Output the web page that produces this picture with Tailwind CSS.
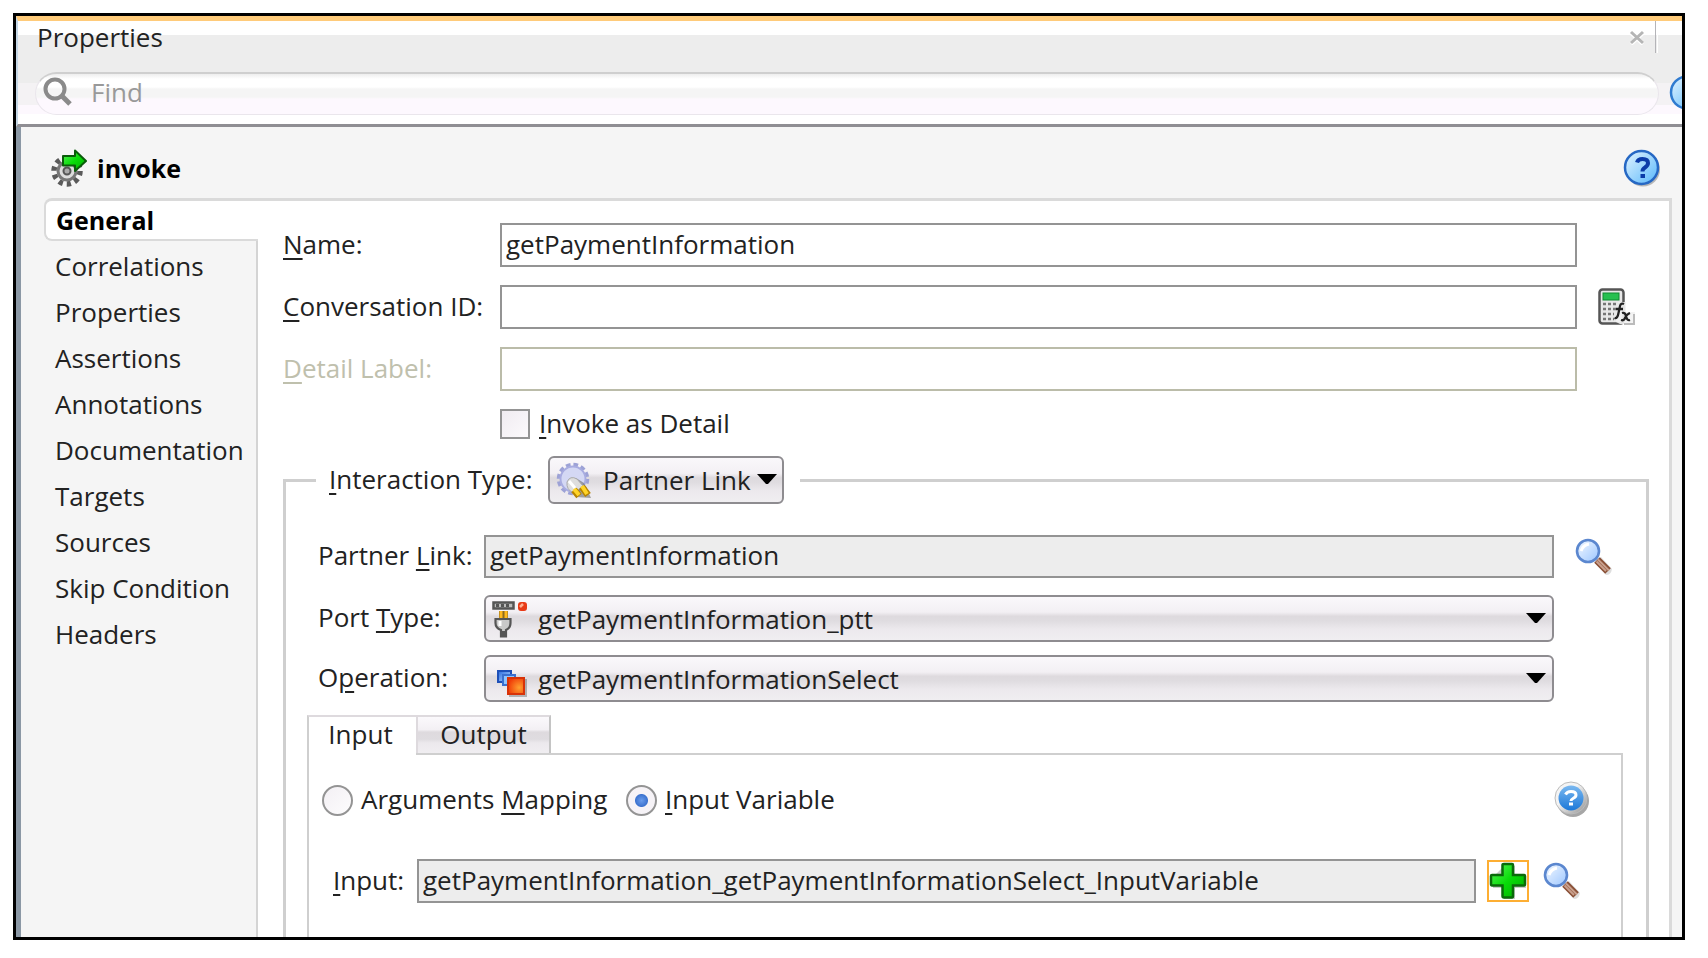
<!DOCTYPE html>
<html lang="en">
<head>
<meta charset="utf-8">
<title>Properties</title>
<script src="https://cdn.jsdelivr.net/npm/@tailwindcss/browser@4"></script>
</head>
<body class="bg-white">
<svg class="absolute size-0" aria-hidden="true">
  <defs>
    <linearGradient id="glass" x1="0" y1="0" x2="1" y2="1"><stop offset="0" stop-color="#f4f9ff"/><stop offset="1" stop-color="#9cc6ff"/></linearGradient>
    <linearGradient id="sky" x1="0" y1="0" x2="1" y2="1"><stop offset="0" stop-color="#e4f4ff"/><stop offset="1" stop-color="#58b8fb"/></linearGradient>
    <linearGradient id="deep" x1="0" y1="0" x2="0" y2="1"><stop offset="0" stop-color="#7ab8f0"/><stop offset="1" stop-color="#1c78d8"/></linearGradient>
    <linearGradient id="rim" x1="0" y1="0" x2="1" y2="1"><stop offset="0.4" stop-color="#f4f4f4"/><stop offset="1" stop-color="#8f8f8f"/></linearGradient>
    <linearGradient id="green" x1="0" y1="0" x2="1" y2="1"><stop offset="0" stop-color="#5cf55c"/><stop offset="0.5" stop-color="#08dc08"/><stop offset="1" stop-color="#02a802"/></linearGradient>
    <radialGradient id="fire" cx="0.7" cy="0.6" r="0.7"><stop offset="0" stop-color="#ffa030"/><stop offset="1" stop-color="#f03c08"/></radialGradient>
    <linearGradient id="blue" x1="0" y1="0" x2="1" y2="1"><stop offset="0" stop-color="#2a6be0"/><stop offset="1" stop-color="#b8dcff"/></linearGradient>
    <symbol id="lens" viewBox="0 0 38 38">
      <path d="M21 22 L26 19 L37 31 Q36 37 31 37 L21 26Z" fill="#000" opacity="0.13"/>
      <path d="M22 22 L33 33" stroke="#8a4f35" stroke-width="8"/>
      <path d="M23 21.500 L34 32.500 M21.500 23.500 L31 33" stroke="#c9a08d" stroke-width="2"/>
      <circle cx="13" cy="13" r="11" fill="url(#glass)" stroke="#5b87cf" stroke-width="2.600"/>
      <path d="M6 13 Q8 7 14 6" fill="none" stroke="#fff" stroke-width="3"/>
    </symbol>
  </defs>
</svg>

<div class="flex min-h-screen pt-[13px] pr-[23px] pb-[18px] pl-[13px] font-['Open_Sans','Noto_Sans',sans-serif] text-[26px] leading-8 text-[#222]">
  <div class="flex flex-1 flex-col overflow-hidden border-3 border-black bg-[#f5f5f5]">

    <header class="border-t-5 border-b-3 border-t-[#ffcb7a] border-b-[#8f8e93] border-l-2 border-l-[#c5d7e6] bg-[linear-gradient(to_bottom,#fff_0,#fff_14px,#ededed_14px,#ededed_62px,#f4f2f4_62px,#f4f2f4_84px,#fdf8fe_84px,#fdf8fe_93px,#fff_93px)] pb-[9px]">
      <div class="flex h-[51px] items-start justify-between pr-6 pl-[19px]">
        <h1>Properties</h1>
        <div class="flex h-8 items-center gap-2">
          <button aria-label="Close" class="flex size-5 items-center justify-center">
            <svg class="size-4" viewBox="0 0 16 16"><path d="M2 4 L14 15 M14 4 L2 15" stroke="#fff" stroke-width="4"/><path d="M2 3 L14 14 M14 3 L2 14" stroke="#b5b5b5" stroke-width="3"/></svg>
          </button>
          <span class="h-8 w-[3px] border-r border-l border-r-white border-l-[#b4b4b8]"></span>
        </div>
      </div>
      <div class="flex items-center gap-[10px] pl-[17px]">
        <label class="flex h-[43px] flex-1 items-center gap-[18px] rounded-full border border-t-2 border-[#eae6ec] border-t-[#cfcfcf] bg-[linear-gradient(to_bottom,#eee_0,#fff_5px,#fff_13px,#f5f5f5_15px,#f5f5f5_23px,#fdf8fe_25px)] pb-1 pl-[7px]">
          <svg class="size-[30px] shrink-0" viewBox="0 0 30 30"><circle cx="12" cy="12" r="9.500" fill="none" stroke="#8a8a8a" stroke-width="4"/><path d="M19 19 L27 27" stroke="#8a8a8a" stroke-width="5"/></svg>
          <input type="text" aria-label="Find" placeholder="Find" class="w-full bg-transparent outline-none placeholder:text-[#999]">
        </label>
        <button aria-label="Help" class="w-[13px] overflow-hidden">
          <svg class="h-9 w-9" viewBox="0 0 36 36"><circle cx="18" cy="16.500" r="16" fill="url(#sky)" stroke="#2f7bd0" stroke-width="2.500"/></svg>
        </button>
      </div>
    </header>

    <main class="flex flex-1 flex-col border-l-5 border-[#8b98a5] pr-[10px] pl-[23px]">
      <div class="flex h-[71px] items-center justify-between pt-[10px] pr-[11px] pl-[5px]">
        <div class="flex items-center gap-[10px]">
          <svg class="size-[38px]" viewBox="0 0 38 38">
            <circle cx="18" cy="22" r="13" fill="none" stroke="#5a5a5a" stroke-width="5.500" stroke-dasharray="4.200 3.970"/>
            <circle cx="18" cy="22" r="9" fill="#ddd" stroke="#777" stroke-width="3"/>
            <circle cx="18" cy="22" r="3.500" fill="#aaa" stroke="#555" stroke-width="2"/>
            <path d="M14 7 H26 V1.500 L37 12 L26 22 V16.500 H14Z" fill="url(#green)" stroke="#0a5c0a" stroke-width="2" stroke-linejoin="round"/>
          </svg>
          <h2 class="text-[25px] font-bold text-black">invoke</h2>
        </div>
        <button aria-label="Help">
          <svg class="size-[38px]" viewBox="0 0 38 38">
            <circle cx="20" cy="20.500" r="17" fill="#000" opacity="0.250"/>
            <circle cx="18.500" cy="18.500" r="16.500" fill="url(#sky)" stroke="#2668c4" stroke-width="2.500"/>
            <path d="M14 13.500 Q15 10 19.500 10 Q25 10 25 14 Q25 16.500 22 18.500 Q19.500 20 19.500 22.500" fill="none" stroke="#0b3ba8" stroke-width="4"/>
            <rect x="17.500" y="25" width="4.500" height="4" fill="#0b3ba8"/>
          </svg>
        </button>
      </div>

      <div class="flex flex-1">
        <nav class="flex w-[214px] shrink-0 flex-col">
          <a href="#general" class="flex h-[43px] items-center rounded-l-lg border-2 border-t-3 border-r-0 border-[#dadada] bg-white pl-[10px] text-[25px] font-bold text-black">General</a>
          <div class="flex flex-1 flex-col border-r-2 border-[#d4d4d4] pt-[2px] pl-[11px]">
            <a href="#correlations" class="flex h-[46px] items-center">Correlations</a>
            <a href="#properties" class="flex h-[46px] items-center">Properties</a>
            <a href="#assertions" class="flex h-[46px] items-center">Assertions</a>
            <a href="#annotations" class="flex h-[46px] items-center">Annotations</a>
            <a href="#documentation" class="flex h-[46px] items-center">Documentation</a>
            <a href="#targets" class="flex h-[46px] items-center">Targets</a>
            <a href="#sources" class="flex h-[46px] items-center">Sources</a>
            <a href="#skip" class="flex h-[46px] items-center">Skip Condition</a>
            <a href="#headers" class="flex h-[46px] items-center">Headers</a>
          </div>
        </nav>

        <section id="general" class="flex min-w-0 flex-1 flex-col border-t-3 border-r-3 border-[#dadada] bg-white pt-[22px] pr-5 pl-[25px]">
          <div class="grid grid-cols-[217px_1fr_72px] items-center gap-y-[18px]">
            <label for="name" class="pb-[3px]"><u class="decoration-2 underline-offset-4">N</u>ame:</label>
            <input id="name" type="text" value="getPaymentInformation" class="h-11 min-w-0 border-2 border-[#949494] px-1 pb-[3px]">
            <span></span>
            <label for="conv" class="pb-[3px]"><u class="decoration-2 underline-offset-4">C</u>onversation ID:</label>
            <input id="conv" type="text" class="h-11 min-w-0 border-2 border-[#949494] px-1">
            <button aria-label="Expression builder" class="pl-[21px]">
              <svg class="size-[38px]" viewBox="0 0 38 38">
                <rect x="1.500" y="1.500" width="24" height="34" rx="3" fill="#e8e8e8" stroke="#555" stroke-width="2.500"/>
                <rect x="5" y="5" width="16" height="7" fill="#27c050" stroke="#108a30"/>
                <path d="M5 16 H22 M5 21 H18 M5 26 H16 M5 31 H16" stroke="#777" stroke-width="2.500" stroke-dasharray="3 2"/>
                <path d="M18 34 L20 14 H28 V24 H37 V36 H22Z" fill="#f2f2f2" opacity="0.900"/>
                <path d="M16.500 30 Q19.500 31 20.500 25 L22 18 Q23 14.500 26 16 M18 21 H25" fill="none" stroke="#222" stroke-width="2.300"/>
                <path d="M24 25 Q27 24 28 28 Q29 33 32 32 M32 25 Q29 26 27 30 Q26 33 23 32" fill="none" stroke="#222" stroke-width="2.300"/>
                <path d="M26 36 H36 V26" fill="none" stroke="#bbb" stroke-width="2"/>
              </svg>
            </button>
            <label for="detail" class="pb-[3px] text-[#bfc0ad]"><u class="decoration-2 underline-offset-4">D</u>etail Label:</label>
            <input id="detail" type="text" disabled class="h-11 min-w-0 border-2 border-[#bbbca9] bg-white px-1">
            <span></span>
          </div>

          <div class="mt-[18px] flex h-8 items-center gap-[9px] pb-[2px] pl-[217px]">
            <input id="asdetail" type="checkbox" class="size-[30px] appearance-none border-2 border-[#949494] bg-linear-to-br from-[#f0ecf1] to-[#fcfafc]">
            <label for="asdetail" class="pb-[3px]"><u class="decoration-2 underline-offset-4">I</u>nvoke as Detail</label>
          </div>

          <fieldset class="mt-[15px] flex min-w-0 flex-1 flex-col border-3 border-b-0 border-[#cfcfcf] pr-[23px] pl-[21px]">
            <legend class="ml-[9px] pr-4 pl-[13px]">
              <span class="flex items-center gap-3">
                <label for="itype" class="w-[207px] pb-[3px]"><u class="decoration-2 underline-offset-4">I</u>nteraction Type:</label>
                <span class="relative block">
                  <select id="itype" class="block h-12 w-[236px] appearance-none rounded-md border-2 border-[#8e8c90] bg-[linear-gradient(to_bottom,#faf8fb_0%,#f3f0f4_35%,#dedade_45%,#dfdce0_55%,#ece9ed_75%,#f0eef1_100%)] pr-7 pl-[53px] text-[#222]"><option>Partner Link</option></select>
                  <svg class="pointer-events-none absolute top-[6px] left-2 size-[37px]" viewBox="0 0 37 37">
                    <circle cx="17" cy="17" r="14" fill="none" stroke="#9da2d6" stroke-width="4.500" stroke-dasharray="4.500 2.830"/>
                    <circle cx="17" cy="17" r="12.500" fill="#d4d8f4" stroke="#a8ace0" stroke-width="2"/>
                    <path d="M11 22 Q12 16 20 16 L28 21 L35 36 L20 35Z" fill="#606060" opacity="0.550"/>
                    <path d="M11 20 Q14 13 21 17 L27 24 L18 31 Q10 28 11 20Z" fill="#dedede" stroke="#aaa"/>
                    <path d="M13 19 L19 26" stroke="#fff" stroke-width="3"/>
                    <path d="M18 28 L23 34 M26 25 L32 33" stroke="#b88400" stroke-width="7"/>
                    <path d="M18 27 L23 33 M26 24 L31 32" stroke="#ffd428" stroke-width="4"/>
                  </svg>
                  <svg class="pointer-events-none absolute top-[18px] right-[7px] h-[11px] w-5" viewBox="0 0 20 11"><path d="M0 0 H20 L11 10 H9Z"/></svg>
                </span>
              </span>
            </legend>

            <div class="grid grid-cols-[166px_1fr_69px] items-center pt-[31px] pl-[11px]">
              <label for="plink" class="pb-[3px]">Partner <u class="decoration-2 underline-offset-4">L</u>ink:</label>
              <input id="plink" type="text" readonly value="getPaymentInformation" class="h-[43px] min-w-0 border-2 border-[#949494] bg-[#ededed] px-1 pb-[3px]">
              <button aria-label="Browse partner links" class="pl-[21px]"><svg class="size-[38px]"><use href="#lens"/></svg></button>

              <label for="ptype" class="mt-[14px]">Port <u class="decoration-2 underline-offset-4">T</u>ype:</label>
              <span class="relative mt-[17px] block">
                <select id="ptype" class="block h-[47px] w-full appearance-none rounded-md border-2 border-[#8e8c90] bg-[linear-gradient(to_bottom,#faf8fb_0%,#f3f0f4_35%,#dedade_45%,#dfdce0_55%,#ece9ed_75%,#f0eef1_100%)] pr-10 pl-[52px] text-[#222]"><option>getPaymentInformation_ptt</option></select>
                <svg class="pointer-events-none absolute top-[5px] left-2 size-[38px]" viewBox="0 0 38 38">
                  <rect x="1.500" y="2.500" width="20" height="6" fill="#bbb" stroke="#555" stroke-width="2.500"/>
                  <path d="M4 5.500 H19" stroke="#555" stroke-width="3" stroke-dasharray="3 2"/>
                  <path d="M7 11 H16 V18 H7Z" fill="#8b6a20"/><path d="M9 11 V19 M14 11 V19" stroke="#ffb81c" stroke-width="3"/>
                  <path d="M3.500 19 H18.500 V23 Q18.500 28 14 30 V36.500 H9 V30 Q3.500 28 3.500 23Z" fill="#c9c9c9" stroke="#555" stroke-width="2.200"/>
                  <path d="M8 21 V26" stroke="#fff" stroke-width="3"/><path d="M9 31 H14 V37 H9Z" fill="#555"/>
                  <rect x="26" y="2" width="9" height="9" rx="3" fill="#e83a16"/><path d="M28 7 L31 4" stroke="#ffb090" stroke-width="2.500"/>
                </svg>
                <svg class="pointer-events-none absolute top-[18px] right-2 h-[11px] w-5" viewBox="0 0 20 11"><path d="M0 0 H20 L11 10 H9Z"/></svg>
              </span>
              <span></span>

              <label for="oper" class="mt-[10px]">O<u class="decoration-2 underline-offset-4">p</u>eration:</label>
              <span class="relative mt-[13px] block">
                <select id="oper" class="block h-[47px] w-full appearance-none rounded-md border-2 border-[#8e8c90] bg-[linear-gradient(to_bottom,#faf8fb_0%,#f3f0f4_35%,#dedade_45%,#dfdce0_55%,#ece9ed_75%,#f0eef1_100%)] pr-10 pl-[52px] text-[#222]"><option>getPaymentInformationSelect</option></select>
                <svg class="pointer-events-none absolute top-[14px] left-[13px] h-7 w-[31px]" viewBox="0 0 31 28">
                  <path d="M12 10 H30 V28 H12Z" fill="#000" opacity="0.250"/>
                  <rect x="1" y="2" width="13" height="11" fill="url(#blue)" stroke="#1e50b8" stroke-width="2"/>
                  <rect x="6" y="6" width="12" height="10" fill="#8ec4ff" stroke="#3a70d0" stroke-width="2"/>
                  <rect x="11" y="9" width="16" height="16" fill="url(#fire)" stroke="#d83208" stroke-width="2"/>
                </svg>
                <svg class="pointer-events-none absolute top-[18px] right-2 h-[11px] w-5" viewBox="0 0 20 11"><path d="M0 0 H20 L11 10 H9Z"/></svg>
              </span>
              <span></span>
            </div>

            <div role="tablist" class="mt-[13px] flex h-[38px]">
              <button role="tab" aria-selected="true" class="z-10 -mb-[2px] w-[109px] border-2 border-r-0 border-b-0 border-[#dedade] border-l-[#cfcfcf] bg-white pr-1 pb-1">Input</button>
              <button role="tab" aria-selected="false" class="w-[135px] border-2 border-b-0 border-[#dedade] border-r-[#c4c4c4] bg-[linear-gradient(to_bottom,#fbf9fc_0%,#f3f0f4_35%,#dedade_42%,#dfdce0_62%,#ece9ed_72%,#f0eef1_100%)] pb-[2px]">Output</button>
            </div>
            <div role="tabpanel" class="flex-1 border-2 border-b-0 border-[#cfcfcf] pt-[27px]">
              <div class="flex h-9 items-center pr-[30px] pl-[13px]">
                <input id="rargs" type="radio" name="mode" class="size-[31px] appearance-none rounded-full border-2 border-[#949494] bg-linear-to-br from-[#f3f0f4] to-[#fdfcfd]">
                <label for="rargs" class="ml-2 w-[265px] pb-[2px]">Arguments <u class="decoration-2 underline-offset-4">M</u>apping</label>
                <input id="rvar" type="radio" name="mode" checked class="size-[31px] appearance-none rounded-full border-2 border-[#949494] bg-[radial-gradient(circle,#6a9cec_0,#3d73cf_6px,#f6f3f7_7px)]">
                <label for="rvar" class="ml-2 flex-1 pb-[2px]"><u class="decoration-2 underline-offset-4">I</u>nput Variable</label>
                <button aria-label="Help">
                  <svg class="size-[38px]" viewBox="0 0 38 38">
                    <circle cx="20" cy="20" r="16" fill="#000" opacity="0.350"/>
                    <circle cx="18" cy="17" r="16" fill="url(#rim)" stroke="#bbb"/>
                    <circle cx="18" cy="17" r="12.500" fill="url(#deep)"/>
                    <path d="M12.500 13.500 Q14 10.500 18 10.500 Q23 10.500 23 14 Q23 16 20 17.500 Q18 18.500 18 20" fill="none" stroke="#fff" stroke-width="3"/><rect x="16" y="21.500" width="4" height="3" fill="#fff"/>
                  </svg>
                </button>
              </div>
              <div class="mt-[41px] flex items-center pr-10 pl-6">
                <label for="ivar" class="w-[84px] pb-[3px]"><u class="decoration-2 underline-offset-4">I</u>nput:</label>
                <input id="ivar" type="text" readonly value="getPaymentInformation_getPaymentInformationSelect_InputVariable" class="h-11 min-w-0 flex-1 border-2 border-[#949494] bg-[#ededed] px-1 pb-[3px]">
                <button aria-label="Add variable" class="ml-[11px] flex size-[42px] items-center justify-center border-2 border-[#fdae33]">
                  <svg class="size-[38px]" viewBox="0 0 38 38"><path d="M15 4 H26 V14 H37 V26 H26 V37 H15 V26 H4 V15Z" fill="#000" opacity="0.200"/><path d="M15 2 H23 Q24 2 24 3 V13 H35 Q36 13 36 14 V22 Q36 23.500 35 23.500 H24 V34 Q24 35.500 23 35.500 H15 Q13.500 35.500 13.500 34 V23.500 H3 Q2 23.500 2 22 V14 Q2 13 3 13 H13.500 V3 Q13.500 2 15 2Z" fill="url(#green)" stroke="#0a6a0a" stroke-width="2.500"/></svg>
                </button>
                <button aria-label="Browse variables" class="ml-[14px]"><svg class="size-[38px]"><use href="#lens"/></svg></button>
              </div>
            </div>
          </fieldset>
        </section>
      </div>
    </main>
  </div>
</div>
</body>
</html>
